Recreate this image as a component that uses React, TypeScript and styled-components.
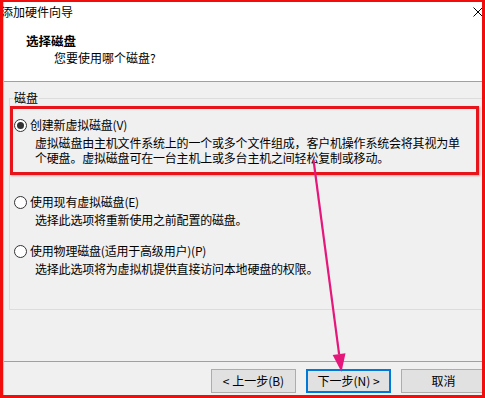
import React from "react";
import styled, { createGlobalStyle } from "styled-components";

const Global = createGlobalStyle`
  html, body { margin: 0; padding: 0; background: #ffffff; }
  body {
    font-family: "Noto Sans CJK SC", "Microsoft YaHei", sans-serif;
    font-size: 12px;
    color: #000;
  }
  * { box-sizing: border-box; }
`;

const Frame = styled.div`
  position: relative;
  width: 485px;
  height: 398px;
  border-style: solid;
  border-color: #f20d0d;
  border-width: 2px 3px 3px 3px;
  overflow: hidden;
  background: #f0f0f0;
`;

const Window = styled.div`
  width: 498px;
  height: 100%;
  display: flex;
  flex-direction: column;
  border-left: 1px solid #c3c7cf;
`;

const TitleBar = styled.div`
  height: 20px;
  flex: none;
  display: flex;
  align-items: center;
  justify-content: space-between;
  background: #ffffff;
`;

const TitleText = styled.span`
  margin-left: -3px;
  line-height: 20px;
  white-space: nowrap;
`;

const CloseButton = styled.div`
  width: 46px;
  height: 20px;
  display: flex;
  align-items: center;
  justify-content: center;
`;

const Header = styled.div`
  height: 60px;
  flex: none;
  background: #ffffff;
  border-bottom: 1px solid #a0a0a0;
  padding: 11px 0 0 22px;
`;

const HeaderTitle = styled.div`
  font-weight: 700;
  font-size: 12.5px;
  line-height: 16px;
`;

const HeaderSub = styled.div`
  margin-top: 1px;
  padding-left: 28px;
  line-height: 16px;
`;

const Body = styled.div`
  flex: 1;
  padding: 8px 6px 0 5px;
`;

const GroupBox = styled.fieldset`
  margin: 0;
  padding: 0 0 33px 0;
  border: 1px solid #dcdcdc;
  min-width: 0;
`;

const GroupLegend = styled.legend`
  margin-left: 3px;
  padding: 0 1px;
  line-height: 16px;
`;

const Options = styled.div`
  padding: 11px 0 0 4px;
  display: flex;
  flex-direction: column;
  letter-spacing: -0.2px;
`;

const Option = styled.div<{ $gap: number }>`
  margin-top: ${(p) => p.$gap}px;
`;

const OptionLabel = styled.div`
  display: flex;
  align-items: center;
  gap: 3px;
  line-height: 16px;
  white-space: nowrap;
`;

const Radio = styled.span<{ $checked?: boolean }>`
  position: relative;
  width: 13px;
  height: 13px;
  flex: none;
  border-radius: 50%;
  border: 1px solid #333333;
  background: #ffffff;
  &::after {
    content: "";
    display: ${(p) => (p.$checked ? "block" : "none")};
    position: absolute;
    left: 2px;
    top: 2px;
    width: 7px;
    height: 7px;
    border-radius: 50%;
    background: #333333;
  }
`;

const OptionDesc = styled.div`
  margin: 2px 0 0 21px;
  line-height: 15px;
  white-space: nowrap;
`;

const Footer = styled.div`
  height: 34px;
  flex: none;
  border-top: 1px solid #a0a0a0;
  padding: 7px 15px 0 0;
  display: flex;
  justify-content: flex-end;
  gap: 10px;
`;

const Button = styled.div<{ $default?: boolean }>`
  width: 85px;
  height: 24px;
  display: flex;
  align-items: center;
  justify-content: center;
  background: #e1e1e1;
  border: 1px solid ${(p) => (p.$default ? "#0078d7" : "#adadad")};
  box-shadow: ${(p) => (p.$default ? "inset 0 0 0 1px #0078d7" : "none")};
  line-height: 16px;
  white-space: nowrap;
`;

const Highlight = styled.div`
  position: absolute;
  left: 7px;
  top: 104px;
  width: 469px;
  height: 69px;
  border: 3px solid #e8141c;
  box-shadow: 1px 1px 2px rgba(120, 0, 0, 0.3);
  pointer-events: none;
`;

const ArrowLayer = styled.svg`
  position: absolute;
  left: 0;
  top: 0;
  width: 479px;
  height: 393px;
  pointer-events: none;
`;

export default function App() {
  return (
    <>
      <Global />
      <Frame>
        <Window>
          <TitleBar>
            <TitleText>添加硬件向导</TitleText>
            <CloseButton>
              <svg width="10" height="10" viewBox="0 0 10 10">
                <path d="M0.5 0.5 L9.5 9.5 M9.5 0.5 L0.5 9.5" stroke="#000" strokeWidth="1" fill="none" />
              </svg>
            </CloseButton>
          </TitleBar>
          <Header>
            <HeaderTitle>选择磁盘</HeaderTitle>
            <HeaderSub>您要使用哪个磁盘?</HeaderSub>
          </Header>
          <Body>
            <GroupBox>
              <GroupLegend>磁盘</GroupLegend>
              <Options>
                <Option $gap={0}>
                  <OptionLabel>
                    <Radio $checked />
                    创建新虚拟磁盘(V)
                  </OptionLabel>
                  <OptionDesc>
                    虚拟磁盘由主机文件系统上的一个或多个文件组成，客户机操作系统会将其视为单
                    <br />
                    个硬盘。虚拟磁盘可在一台主机上或多台主机之间轻松复制或移动。
                  </OptionDesc>
                </Option>
                <Option $gap={29}>
                  <OptionLabel>
                    <Radio />
                    使用现有虚拟磁盘(E)
                  </OptionLabel>
                  <OptionDesc>选择此选项将重新使用之前配置的磁盘。</OptionDesc>
                </Option>
                <Option $gap={16}>
                  <OptionLabel>
                    <Radio />
                    使用物理磁盘(适用于高级用户)(P)
                  </OptionLabel>
                  <OptionDesc>选择此选项将为虚拟机提供直接访问本地硬盘的权限。</OptionDesc>
                </Option>
              </Options>
            </GroupBox>
          </Body>
          <Footer>
            <Button>&lt; 上一步(B)</Button>
            <Button $default>下一步(N) &gt;</Button>
            <Button>取消</Button>
          </Footer>
        </Window>
        <Highlight />
        <ArrowLayer viewBox="0 0 479 393">
          <line x1="310.5" y1="158" x2="336.1" y2="352.2" stroke="#e5177b" strokeWidth="2.2" />
          <polygon points="338.5,370 342.5,351.3 329.7,353" fill="#e5177b" />
        </ArrowLayer>
      </Frame>
    </>
  );
}
